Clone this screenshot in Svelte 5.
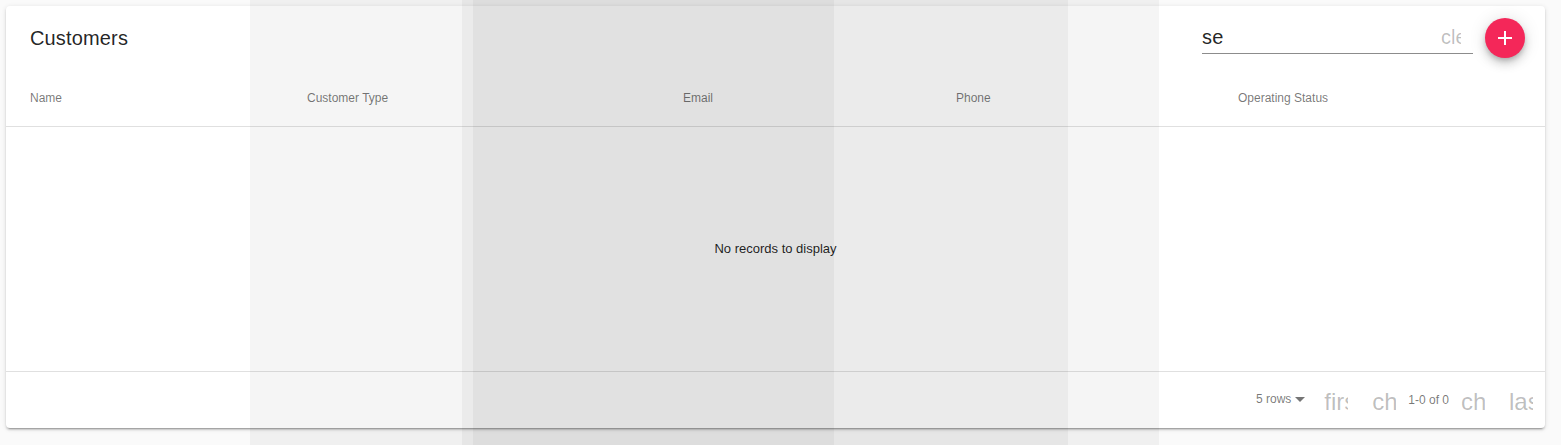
<script>
  const columns = ['Name', 'Customer Type', 'Email', 'Phone', 'Operating Status'];
  const bands = ['a', 'b', 'c'];
</script>

<div class="page">
  <section class="card">
    <header class="toolbar">
      <h2>Customers</h2>
      <div class="search">
        <span class="value">se</span>
        <span class="clear">clear</span>
      </div>
      <button class="fab" aria-label="Add">
        <svg viewBox="0 0 24 24" width="24" height="24"><path d="M19 13h-6v6h-2v-6H5v-2h6V5h2v6h6v2z" fill="#fff" /></svg>
      </button>
    </header>
    <div class="columns">
      {#each columns as c}
        <div class="col">{c}</div>
      {/each}
    </div>
    <div class="empty">No records to display</div>
    <footer class="pager">
      <span class="rows">5 rows</span>
      <span class="caret"></span>
      <span class="icon first">first_page</span>
      <span class="icon prev">chevron_left</span>
      <span class="count">1-0 of 0</span>
      <span class="icon next">chevron_right</span>
      <span class="icon last">last_page</span>
    </footer>
  </section>
  {#each bands as b}
    <div class="band {b}"></div>
  {/each}
</div>

<style>
  :global(body) {
    margin: 0;
    background: #fafafa;
    font-family: "Liberation Sans", Arial, sans-serif;
  }
  .page {
    position: relative;
    height: 445px;
    padding: 6px 16px 0 6px;
    box-sizing: border-box;
    overflow: hidden;
  }
  .card {
    display: flex;
    flex-direction: column;
    height: 422px;
    background: #fff;
    border-radius: 4px;
    box-shadow: 0 3px 1px -2px rgba(0,0,0,.2), 0 2px 2px 0 rgba(0,0,0,.14), 0 1px 5px 0 rgba(0,0,0,.12);
  }
  .toolbar {
    display: flex;
    align-items: center;
    height: 64px;
    padding: 0 20px 0 24px;
    flex: none;
  }
  h2 {
    margin: 0;
    flex: 1;
    font-size: 20px;
    font-weight: 400;
    line-height: 1;
    letter-spacing: 0.15px;
    color: rgba(0,0,0,.87);
  }
  .search {
    display: flex;
    justify-content: space-between;
    align-items: center;
    box-sizing: border-box;
    width: 271px;
    height: 32px;
    margin: 0 12px 0 0;
    border-bottom: 1px solid #8c8c8c;
    overflow: hidden;
  }
  .value {
    font-size: 20px;
    letter-spacing: 0.15px;
    color: rgba(0,0,0,.87);
  }
  .clear {
    width: 20px;
    margin-right: 12px;
    overflow: hidden;
    font-size: 20px;
    color: rgba(0,0,0,.26);
  }
  .fab {
    width: 40px;
    height: 40px;
    padding: 0;
    display: flex;
    align-items: center;
    justify-content: center;
    border: 0;
    border-radius: 50%;
    background: #f42759;
    box-shadow: 0 3px 5px -1px rgba(0,0,0,.2), 0 6px 10px 0 rgba(0,0,0,.14), 0 1px 18px 0 rgba(0,0,0,.12);
  }
  .columns {
    display: grid;
    grid-template-columns: 277px 376px 273px 282px 1fr;
    align-items: center;
    height: 56px;
    padding-left: 24px;
    border-bottom: 1px solid #e0e0e0;
    flex: none;
    font-size: 12px;
    color: rgba(0,0,0,.54);
  }
  .empty {
    flex: 1;
    display: flex;
    align-items: center;
    justify-content: center;
    padding-bottom: 2px;
    font-size: 13px;
    color: rgba(0,0,0,.87);
  }
  .pager {
    display: flex;
    align-items: center;
    justify-content: flex-end;
    height: 56px;
    padding-right: 12px;
    border-top: 1px solid #e0e0e0;
    flex: none;
    font-size: 12px;
    color: rgba(0,0,0,.54);
  }
  .rows { margin: 0 4px 2px 0; }
  .caret {
    width: 0;
    height: 0;
    margin: 0 19px 2px 0;
    border-left: 5px solid transparent;
    border-right: 5px solid transparent;
    border-top: 5px solid rgba(0,0,0,.54);
  }
  .icon {
    width: 24px;
    padding-top: 3px;
    overflow: hidden;
    white-space: nowrap;
    font-size: 24px;
    color: rgba(0,0,0,.26);
  }
  .prev { margin-left: 24px; }
  .count { margin: 0 12px 0 12px; }
  .last { margin-left: 24px; }
  .band {
    position: absolute;
    top: 0;
    bottom: 0;
    pointer-events: none;
    background: rgba(0,0,0,.038);
  }
  .a { left: 250px; width: 909px; }
  .b { left: 462px; width: 606px; }
  .c { left: 473px; width: 361px; }
</style>
